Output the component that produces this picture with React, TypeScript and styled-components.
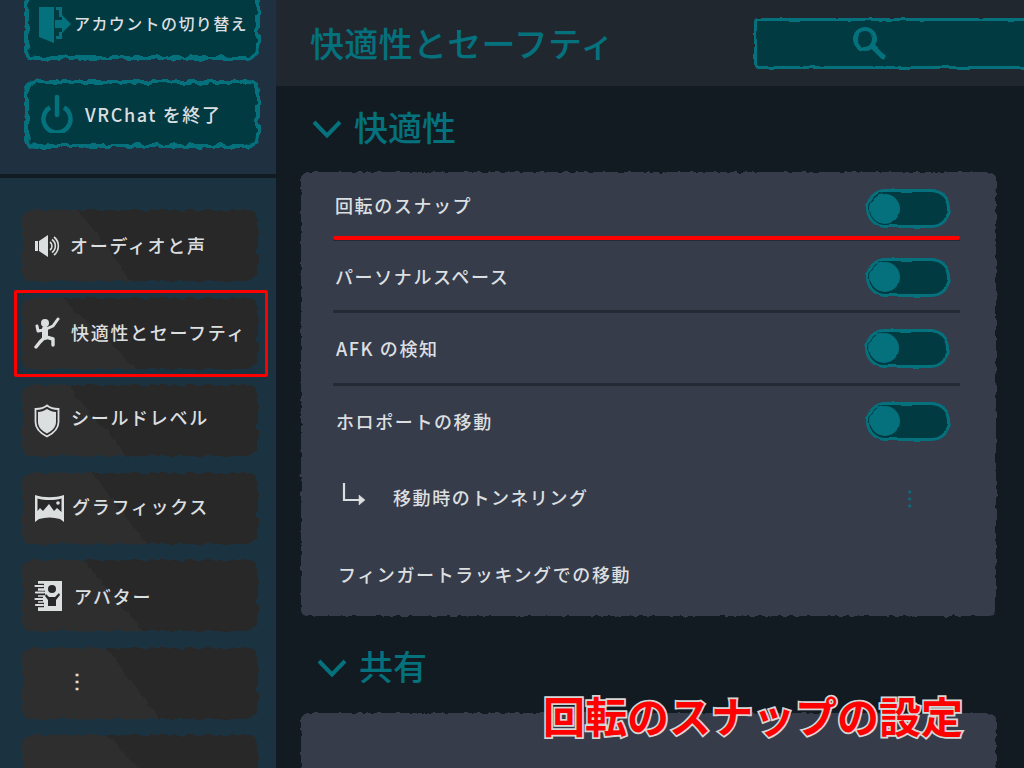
import styled, { createGlobalStyle } from "styled-components";

const TEAL = "#04717d";
const TEAL_DARK = "#013a40";
const TEXT = "#dcdfe0";
const RED = "#ff0000";

const GlobalStyle = createGlobalStyle`
  html, body {
    margin: 0;
    padding: 0;
    background: #121b21;
  }
  * {
    box-sizing: border-box;
  }
`;

// diagonal lighter brush stroke on the nav items, from x at top to x at bottom
const brush = (top: number, bottom: number) => {
  const w = 236;
  const h = 71;
  const a = Math.atan2(h, bottom - top);
  const len = w * Math.sin(a) + h * Math.abs(Math.cos(a));
  const stop = (top - w / 2) * Math.sin(a) + (h / 2) * Math.cos(a) + len / 2;
  return `linear-gradient(${(a * 180) / Math.PI}deg, #2e2e2e ${stop}px, #282828 ${stop}px)`;
};

const RoughFilters = () => (
  <FilterDefs aria-hidden="true">
    <defs>
      <filter id="rough-lg" x="-5%" y="-10%" width="110%" height="120%" colorInterpolationFilters="sRGB">
        <feTurbulence type="fractalNoise" baseFrequency="0.11" numOctaves="2" seed="4" />
        <feDisplacementMap in="SourceGraphic" scale="7" xChannelSelector="R" yChannelSelector="G" />
      </filter>
      <filter id="rough-sm" x="-2%" y="-2%" width="104%" height="104%" colorInterpolationFilters="sRGB">
        <feTurbulence type="fractalNoise" baseFrequency="0.16" numOctaves="2" seed="9" />
        <feDisplacementMap in="SourceGraphic" scale="5" xChannelSelector="R" yChannelSelector="G" />
      </filter>
      <filter id="rough-xs" x="-5%" y="-10%" width="110%" height="120%" colorInterpolationFilters="sRGB">
        <feTurbulence type="fractalNoise" baseFrequency="0.09" numOctaves="1" seed="2" />
        <feDisplacementMap in="SourceGraphic" scale="3" xChannelSelector="R" yChannelSelector="G" />
      </filter>
    </defs>
  </FilterDefs>
);

const DoorIcon = () => (
  <svg width="34" height="38" viewBox="0 0 34 38" fill={TEAL}>
    <path d="M1 1H16V37L1 31Z" />
    <path d="M18 1H24V11H21V4H18Z" />
    <path d="M21 26H24V33H18V30H21Z" />
    <path d="M17 14H24V9L33 18L24 27V22H17Z" />
  </svg>
);

const PowerIcon = () => (
  <svg width="32" height="38" viewBox="0 0 32 38" fill="none" stroke={TEAL} strokeWidth="4.5">
    <path d="M9 12.5A13.5 13.5 0 1 0 23 12.5" />
    <path d="M16 2V20" strokeLinecap="round" />
  </svg>
);

const SpeakerIcon = () => (
  <svg width="27" height="24" viewBox="0 0 27 24" fill="none">
    <path d="M1 7H4V17H1Z M5 7L14 1V23L5 17Z" fill={TEXT} />
    <path d="M16 8A5 5 0 0 1 16 16M18 5.5A8 8 0 0 1 18 18.5M20 3A11.5 11.5 0 0 1 20 21" stroke={TEXT} strokeWidth="1.6" />
  </svg>
);

const RunnerIcon = () => (
  <svg width="26" height="32" viewBox="0 0 26 32" fill="none" stroke={TEXT} strokeLinecap="round" strokeLinejoin="round">
    <circle cx="11" cy="6" r="4" fill={TEXT} stroke="none" />
    <path d="M3 9L4 14L10 13L19 9L24 2" strokeWidth="3" />
    <path d="M11 12L11 20" strokeWidth="6" />
    <path d="M10 21L6 25L2 30" strokeWidth="3.4" />
    <path d="M12 20L19 22L19 28" strokeWidth="3.4" />
  </svg>
);

const ShieldIcon = () => (
  <svg width="26" height="34" viewBox="0 0 26 34" fill="none">
    <path d="M13 1.5C16 4 20 5 24.5 5V18C24.5 25 19 29.5 13 32.5C7 29.5 1.5 25 1.5 18V5C6 5 10 4 13 1.5Z" stroke={TEXT} strokeWidth="1.8" />
    <path d="M13 5C16 7 19 8 22 8V18C22 23.5 17.5 27 13 29.5C8.5 27 4 23.5 4 18V8C7 8 10 7 13 5Z" fill={TEXT} />
  </svg>
);

const PanoramaIcon = () => (
  <svg width="31" height="29" viewBox="0 0 31 29" fill="none">
    <path d="M1 1C10 4 21 4 30 1V28L26 25C19 23 12 23 5 25L1 28Z" fill={TEXT} />
    <path d="M3.500 4.500C11 6.500 20 6.500 27.500 4.500V18L23 14L20 17L15 10L9 17L6 14L3.500 17Z" fill="#282828" />
    <circle cx="24" cy="9" r="1.800" fill={TEXT} />
  </svg>
);

const AvatarIcon = () => (
  <svg width="29" height="31" viewBox="0 0 29 31" fill="none">
    <path d="M4 1H28V31H4Z" fill={TEXT} />
    <circle cx="18" cy="9" r="4" fill="#282828" />
    <path d="M12 14L15 17H21L25 13L26 15L22 20V26H14V20L11 16Z" fill="#282828" />
    <path d="M1 6H10M2 13H11M1 19H9M2 25H10" stroke="#282828" strokeWidth="4.5" />
    <path d="M1.5 6H9M2 12.5H10M1.5 19H9M2 25H9" stroke={TEXT} strokeWidth="2.2" strokeLinecap="round" />
  </svg>
);

const SubdirIcon = () => (
  <svg width="26" height="24" viewBox="0 0 26 24" fill="none" stroke={TEXT} strokeWidth="2.2">
    <path d="M2 1V18H17" />
    <path d="M17 13L23 18L17 23Z" fill={TEXT} strokeWidth="0.5" />
  </svg>
);

const SearchIcon = () => (
  <svg width="34" height="34" viewBox="0 0 34 34" fill="none" stroke={TEAL}>
    <circle cx="13" cy="13" r="10" strokeWidth="4" />
    <path d="M21 21L31 31" strokeWidth="5" strokeLinecap="round" />
  </svg>
);

const Chevron = () => (
  <svg width="30" height="18" viewBox="0 0 30 18" fill="none" stroke={TEAL} strokeWidth="4">
    <path d="M2 2L15 15.5L28 2" />
  </svg>
);

const Toggle = ({ shift = 0, drop = 0 }: { shift?: number; drop?: number }) => (
  <ToggleTrack $shift={shift} $drop={drop}>
    <ToggleKnob />
  </ToggleTrack>
);

const NAV_ITEMS = [
  { label: "オーディオと声", icon: <SpeakerIcon />, slot: 36, lift: 2, top: 55, bottom: 110 },
  { label: "快適性とセーフティ", icon: <RunnerIcon />, slot: 37, lift: 2, top: 40, bottom: 115 },
  { label: "シールドレベル", icon: <ShieldIcon />, slot: 37, lift: 8, top: 45, bottom: 105 },
  { label: "グラフィックス", icon: <PanoramaIcon />, slot: 38, lift: 4, top: 70, bottom: 125 },
  { label: "アバター", icon: <AvatarIcon />, slot: 40, lift: 0, top: 62, bottom: 120 },
];

const App = () => {
  return (
    <Page>
      <GlobalStyle />
      <RoughFilters />
      <Sidebar>
        <TopActions>
          <ActionButton $pad={14}>
            <DoorIcon />
            <ActionLabel $gap={2} $size={16} $spacing={1.4} $lift={4}>
              アカウントの切り替え
            </ActionLabel>
          </ActionButton>
          <ActionButton $pad={17}>
            <PowerIcon />
            <ActionLabel $gap={12} $size={18} $spacing={1.6} $lift={0}>
              VRChat を終了
            </ActionLabel>
          </ActionButton>
        </TopActions>
        <SideDivider />
        <Nav>
          {NAV_ITEMS.map((item) => (
            <NavItem key={item.label} $bg={brush(item.top, item.bottom)}>
              <NavIcon $slot={item.slot}>{item.icon}</NavIcon>
              <NavLabel $lift={item.lift}>{item.label}</NavLabel>
            </NavItem>
          ))}
          <NavItem $bg={brush(85, 137)}>
            <NavDots>⋮</NavDots>
          </NavItem>
          <NavItem $bg={brush(85, 150)} />
        </Nav>
      </Sidebar>

      <Main>
        <Header>
          <Title>快適性とセーフティ</Title>
          <SearchBox>
            <SearchIcon />
          </SearchBox>
        </Header>
        <Content>
          <SectionHead $height={86} $top={0} $left={36}>
            <Chevron />
            <SectionTitle>快適性</SectionTitle>
          </SectionHead>
          <Panel>
            <Row $height={69} $line>
              <RowLabel>回転のスナップ</RowLabel>
              <Toggle drop={7} />
              <RedLine />
            </Row>
            <Row $height={72} $line>
              <RowLabel>パーソナルスペース</RowLabel>
              <Toggle drop={3} />
            </Row>
            <Row $height={73} $line>
              <RowLabel $left={3}>AFK の検知</RowLabel>
              <Toggle shift={1} />
            </Row>
            <Row $height={73}>
              <RowLabel $left={3}>ホロポートの移動</RowLabel>
              <Toggle />
            </Row>
            <Row $height={79}>
              <SubIcon>
                <SubdirIcon />
              </SubIcon>
              <RowLabel>移動時のトンネリング</RowLabel>
              <TealDots>⋮</TealDots>
            </Row>
            <Row $height={74}>
              <RowLabel $left={5}>フィンガートラッキングでの移動</RowLabel>
            </Row>
          </Panel>
          <SectionHead $height={97} $top={7} $left={41}>
            <Chevron />
            <SectionTitle>共有</SectionTitle>
          </SectionHead>
          <Panel $open />
        </Content>
      </Main>

      <RedBox />
      <Caption>回転のスナップの設定</Caption>
    </Page>
  );
};

export default App;

const FilterDefs = styled.svg`
  position: absolute;
  width: 0;
  height: 0;
`;

const Page = styled.div`
  position: relative;
  display: flex;
  width: 1024px;
  height: 768px;
  overflow: hidden;
  background: #121b21;
  color: ${TEXT};
  font-family: "Noto Sans CJK JP", "Noto Sans", sans-serif;
`;

const Sidebar = styled.aside`
  display: flex;
  flex-direction: column;
  flex: 0 0 276px;
  background: #1b3241;
`;

const TopActions = styled.div`
  display: flex;
  flex-direction: column;
  flex: 0 0 174px;
  gap: 20px;
  padding: 0 16px 0 24px;
  background: #1f3040;
  overflow: hidden;
`;

const ActionButton = styled.button<{ $pad: number }>`
  position: relative;
  display: flex;
  align-items: center;
  flex: 0 0 68px;
  width: 236px;
  padding: 0 0 0 ${(p) => p.$pad}px;
  border: 0;
  background: none;
  color: inherit;
  font: inherit;

  &:first-child {
    flex-basis: 70px;
    margin-top: -10px;
  }

  &::before {
    content: "";
    position: absolute;
    inset: 0;
    background: ${TEAL_DARK};
    border: 4px solid ${TEAL};
    border-radius: 12px;
    filter: url(#rough-lg);
  }

  & > * {
    position: relative;
  }
`;

const ActionLabel = styled.span<{ $gap: number; $size: number; $spacing: number; $lift: number }>`
  margin: 0 0 ${(p) => p.$lift}px ${(p) => p.$gap}px;
  font-size: ${(p) => p.$size}px;
  font-weight: 500;
  letter-spacing: ${(p) => p.$spacing}px;
  white-space: nowrap;
`;

const SideDivider = styled.div`
  flex: 0 0 4px;
  background: #121b21;
`;

const Nav = styled.nav`
  display: flex;
  flex-direction: column;
  gap: 16.5px;
  padding: 32px 0 0 22px;
`;

const NavItem = styled.div<{ $bg: string }>`
  position: relative;
  display: flex;
  align-items: center;
  flex: 0 0 71px;
  width: 236px;
  padding-left: 12px;

  &::before {
    content: "";
    position: absolute;
    inset: 0;
    background: ${(p) => p.$bg};
    border-radius: 12px;
    filter: url(#rough-lg);
  }

  & > * {
    position: relative;
  }
`;

const NavIcon = styled.span<{ $slot: number }>`
  display: flex;
  flex: 0 0 ${(p) => p.$slot}px;
`;

const NavLabel = styled.span<{ $lift: number }>`
  margin-bottom: ${(p) => p.$lift}px;
  font-size: 18px;
  font-weight: 500;
  letter-spacing: 1.7px;
  white-space: nowrap;
`;

const NavDots = styled.span`
  margin: 0 0 6px 33px;
  font-size: 20px;
  font-weight: 700;
  line-height: 1;
`;

const Main = styled.main`
  display: flex;
  flex-direction: column;
  flex: 1;
  min-width: 0;
`;

const Header = styled.header`
  display: flex;
  align-items: center;
  flex: 0 0 86px;
  padding-left: 34px;
  background: #20272f;
`;

const Title = styled.h1`
  flex: 0 0 444px;
  margin: 0 0 2px;
  color: ${TEAL};
  font-size: 34px;
  font-weight: 500;
  letter-spacing: 0.3px;
  white-space: nowrap;
`;

const SearchBox = styled.div`
  display: flex;
  align-items: center;
  flex: 0 0 300px;
  height: 51px;
  padding-left: 95px;
  background: ${TEAL_DARK};
  border: 3px solid ${TEAL};
  border-radius: 4px;
  filter: url(#rough-xs);
`;

const Content = styled.div`
  flex: 1;
  min-height: 0;
`;

const SectionHead = styled.div<{ $height: number; $top: number; $left: number }>`
  display: flex;
  align-items: center;
  gap: 12px;
  height: ${(p) => p.$height}px;
  padding: ${(p) => p.$top}px 0 0 ${(p) => p.$left}px;
`;

const SectionTitle = styled.h2`
  margin: 0 0 5px;
  color: ${TEAL};
  font-size: 34px;
  font-weight: 500;
`;

const Panel = styled.section<{ $open?: boolean }>`
  position: relative;
  width: 695px;
  height: ${(p) => (p.$open ? "200px" : "444px")};
  margin-left: 25px;
  padding: 0 36px 0 32px;

  &::before {
    content: "";
    position: absolute;
    inset: 0;
    background: #363c4a;
    border-radius: 6px;
    filter: url(#rough-sm);
  }
`;

const Row = styled.div<{ $height: number; $line?: boolean }>`
  position: relative;
  display: flex;
  align-items: center;
  height: ${(p) => p.$height}px;
  border-bottom: 3px solid ${(p) => (p.$line ? "#252b35" : "transparent")};
`;

const RowLabel = styled.span<{ $left?: number }>`
  padding-left: ${(p) => p.$left ?? 2}px;
  font-size: 18px;
  font-weight: 500;
  letter-spacing: 1.6px;
  white-space: nowrap;
`;

const SubIcon = styled.span`
  display: flex;
  flex: 0 0 49px;
  margin: -6px 0 0 9px;
`;

const TealDots = styled.span`
  margin: 0 40px 0 auto;
  color: ${TEAL};
  font-size: 20px;
  font-weight: 700;
  line-height: 1;
`;

const ToggleTrack = styled.div<{ $shift: number; $drop: number }>`
  position: relative;
  display: flex;
  align-items: center;
  width: 85px;
  height: 39px;
  margin: ${(p) => p.$drop}px ${(p) => 9 + p.$shift}px 0 auto;
  padding-left: 1px;
  background: ${TEAL_DARK};
  border: 3.5px solid ${TEAL};
  border-radius: 20px;
  filter: url(#rough-xs);
`;

const ToggleKnob = styled.div`
  flex: 0 0 30px;
  height: 30px;
  background: ${TEAL};
  border-radius: 50%;
`;

const RedLine = styled.div`
  position: absolute;
  left: 0;
  right: 0;
  bottom: -2px;
  height: 4px;
  background: ${RED};
  border-radius: 2px;
`;

const RedBox = styled.div`
  position: absolute;
  left: 14px;
  top: 290px;
  width: 254px;
  height: 87px;
  border: 3.5px solid ${RED};
  border-radius: 2px;
`;

const Caption = styled.div`
  position: absolute;
  left: 543px;
  top: 685px;
  color: ${RED};
  font-size: 42px;
  font-weight: 700;
  line-height: 60px;
  white-space: nowrap;
  -webkit-text-stroke: 3.5px #d6d6d6;
  paint-order: stroke fill;
`;
